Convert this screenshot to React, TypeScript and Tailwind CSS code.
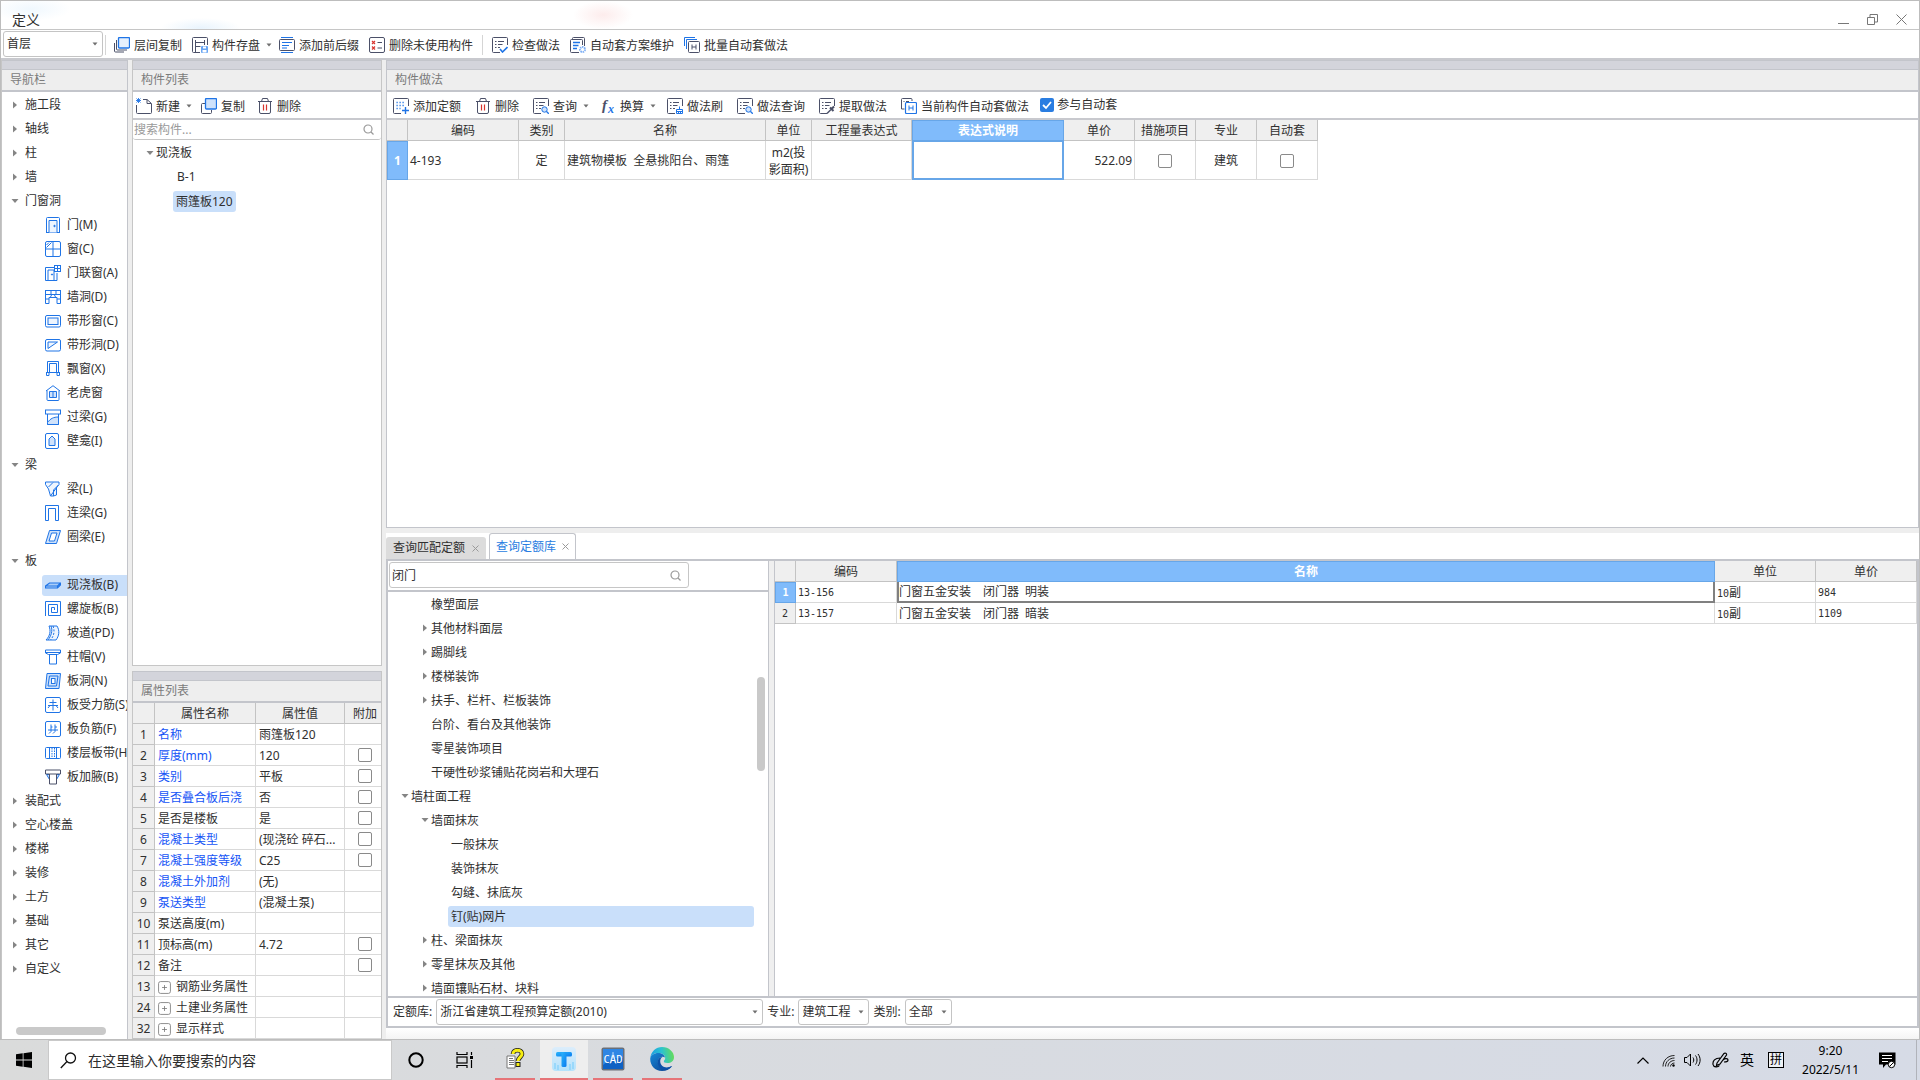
import type { ReactNode } from "react";

const D = "#4b5068";
const B = "#1f74e6";
const L = "#cfe2fb";

function Svg({ children, size = 16, stroke = B }: { children: ReactNode; size?: number; stroke?: string }) {
  return (
    <svg width={size} height={size} viewBox="0 0 16 16" fill="none" stroke={stroke} strokeWidth="1" className="shrink-0" aria-hidden="true">
      {children}
    </svg>
  );
}

/* ---------- toolbar icons ---------- */

const noteLines = (
  <>
    <path d="M15.500 8V1.500a1 1 0 0 0-1-1h-13a1 1 0 0 0-1 1v13a1 1 0 0 0 1 1H8" stroke={D} />
    <path d="M3 4.500h1.500M6 4.500h6M3 7.500h1.500M6 7.500h4.500M3 10.500h1.500M6 10.500h2" stroke={D} />
  </>
);

const tool: Record<string, ReactNode> = {
  floorCopy: (
    <>
      <rect x="4.500" y="0.500" width="11" height="10.500" rx="1" fill="#e6f0fd" strokeWidth="1.300" />
      <path d="M2.500 3v9a1 1 0 0 0 1 1H13" stroke={D} />
      <path d="M0.500 6v8a1 1 0 0 0 1 1H10" stroke={D} />
    </>
  ),
  store: (
    <>
      <path d="M8 15.500H1.500a1 1 0 0 1-1-1v-13a1 1 0 0 1 1-1h13a1 1 0 0 1 1 1V8" stroke={D} />
      <path d="M3.500 3v12M3.500 5.500h9M12.500 3v5M3.500 9.500h5" stroke={D} />
      <rect x="9" y="9" width="7" height="7" rx="1" fill="#6aa6f3" stroke="none" />
      <rect x="11" y="9.500" width="3" height="2" fill="#fff" stroke="none" />
      <rect x="10.500" y="13" width="4" height="2.500" fill="#fff" stroke="none" />
    </>
  ),
  affix: (
    <>
      <path d="M2 0.500h12M2 15.500h12" strokeWidth="1.200" />
      <rect x="0.500" y="2.500" width="15" height="11" rx="1" stroke={D} />
      <path d="M3 5.500h10M3 8.500h7M3 11h5" strokeWidth="1.200" />
    </>
  ),
  unused: (
    <>
      <rect x="0.500" y="0.500" width="15" height="15" rx="1.500" stroke={D} />
      <path d="M3 4l3 3M6 4l-3 3M3 9.500l3 3M6 9.500l-3 3" stroke="#d8342e" strokeWidth="1.200" />
      <path d="M8.500 5.500h4.500M8.500 11h4.500" stroke={D} />
    </>
  ),
  check: (
    <>
      {noteLines}
      <path d="M8 12l2.500 3 5-5" strokeWidth="1.600" />
    </>
  ),
  scheme: (
    <>
      <path d="M2.500 2.500v-1a1 1 0 0 1 1-1h10a1 1 0 0 1 1 1V9" stroke={D} />
      <path d="M9 15.500H1.500a1 1 0 0 1-1-1v-11a1 1 0 0 1 1-1h10a1 1 0 0 1 1 1V8" stroke={D} />
      <path d="M3 5.500h7M3 8.500h5.500M3 11.500h4" strokeWidth="1.300" />
      <circle cx="12.500" cy="12.500" r="2.500" stroke="#7fb0f5" strokeWidth="2" strokeDasharray="1.500 0.700" />
    </>
  ),
  batch: (
    <>
      <path d="M0.500 9V0.500H11" />
      <path d="M2.500 12V2.500H13" />
      <rect x="4.500" y="4.500" width="11" height="11" rx="1" stroke={D} />
      <path d="M8 7.500v5M12 7.500v5M8 10h4" stroke={D} />
    </>
  ),
  create: (
    <>
      <path d="M7 1.500h4l4.500 4v9a1 1 0 0 1-1 1h-13a1 1 0 0 1-1-1V7" stroke={D} />
      <path d="M11 1.500v4h4" stroke={D} />
      <path d="M0.500 0.500l4 4M4.500 0.500l-4 4M2.500 0v5M0 2.500h5" strokeWidth="0.900" />
    </>
  ),
  copy: (
    <>
      <path d="M4 5.500H1.500a1 1 0 0 0-1 1v8a1 1 0 0 0 1 1h8a1 1 0 0 0 1-1V12" stroke={D} />
      <rect x="4.500" y="0.500" width="11" height="10.500" rx="1" fill={L} strokeWidth="1.300" />
    </>
  ),
  trash: (
    <>
      <path d="M1 3.500h14M4.500 3.500l1-3h5l1 3M2.500 3.500V14a1.500 1.500 0 0 0 1.500 1.500h8a1.500 1.500 0 0 0 1.500-1.500V3.500" stroke={D} />
      <path d="M6.500 6.500v6M9.500 6.500v6" stroke="#d8342e" strokeWidth="1.200" />
    </>
  ),
  addQuota: (
    <>
      <path d="M15.500 8V1.500a1 1 0 0 0-1-1h-13a1 1 0 0 0-1 1v13a1 1 0 0 0 1 1H8" stroke={D} />
      <path d="M3.500 4.500h9M3.500 7.500h9M3.500 10.500h4" strokeDasharray="1.200 1.800" strokeWidth="1.300" />
      <path d="M12.500 9v7M9 12.500h7" strokeWidth="1.400" />
    </>
  ),
  query: (
    <>
      {noteLines}
      <circle cx="11.500" cy="11.500" r="2.700" fill={L} />
      <path d="M13.500 13.500l2.300 2.300" strokeWidth="1.300" />
    </>
  ),
  brush: (
    <>
      {noteLines}
      <path d="M9.500 15.500v-4h6v4zM12.500 8.500v3M9.500 13.500h6M11.500 13.500v2M13.500 13.500v2" />
    </>
  ),
  extract: (
    <>
      {noteLines}
      <path d="M8 15.500l4-4" stroke={D} strokeWidth="1.400" />
      <path d="M11 9.500l3.500 3.500M12.500 11l2.500-2.500" stroke={D} strokeWidth="2" />
    </>
  ),
  current: (
    <>
      <path d="M0.500 11V1.500a1 1 0 0 1 1-1H10a1 1 0 0 1 1 1V3M2.500 3.500h1M5 3.500h3" stroke={D} />
      <path d="M0.500 11h3" stroke={D} />
      <rect x="4.500" y="4.500" width="11" height="11" rx="1" strokeWidth="1.200" />
      <path d="M8 7.500v5M12 7.500v5M8 10h4" />
    </>
  ),
  fx: (
    <g stroke="none">
      <text x="2" y="12" fontFamily="Liberation Serif, serif" fontStyle="italic" fontWeight="700" fontSize="15" fill={D}>f</text>
      <text x="8" y="15" fontFamily="Liberation Serif, serif" fontStyle="italic" fontWeight="700" fontSize="12" fill={B}>x</text>
    </g>
  ),
};

/* ---------- navigation icons ---------- */

const nav: Record<string, ReactNode> = {
  door: (
    <>
      <path d="M1 15.500h14M1.500 15.500v-14a1 1 0 0 1 1-1h11a1 1 0 0 1 1 1v14" />
      <path d="M4 15.500V3.500h8v12" fill="#eef5fe" />
      <circle cx="9.500" cy="9" r="0.700" fill={B} />
    </>
  ),
  window: (
    <>
      <rect x="0.500" y="0.500" width="15" height="15" rx="1.500" />
      <path d="M8 0.500v15M0.500 8h15M1.500 6.500l5-5M1.500 4l2.500-2.500" />
    </>
  ),
  doorWindow: (
    <>
      <path d="M9 2.500H0.500v13h11.500V8" />
      <path d="M3 15V5h6v10" />
      <circle cx="7" cy="9.500" r="0.600" fill={B} />
      <rect x="9.500" y="0.500" width="6" height="6" fill="#fff" />
      <path d="M12.500 0.500v6M9.500 3.500h6" />
    </>
  ),
  wallHole: (
    <>
      <rect x="0.500" y="1.500" width="15" height="4" />
      <path d="M0.500 5.500v9h3.500v-6h8v6h3.500v-9M6 1.500v4M11 1.500v4M0.500 10h3.500M12 10h3.500M5.500 8l1-2M10.500 8l-1-2" />
    </>
  ),
  stripWindow: (
    <>
      <rect x="0.500" y="2.500" width="15" height="11.500" rx="1.500" />
      <rect x="3" y="5" width="10" height="6.500" fill="#eef5fe" />
    </>
  ),
  stripHole: (
    <>
      <rect x="0.500" y="2.500" width="15" height="11.500" rx="1.500" />
      <path d="M3 11.500V5h9.500z" fill="#eef5fe" />
    </>
  ),
  bay: (
    <>
      <path d="M2.500 11.500v-11h11v11M4.500 11V2.500h7V11M1 11.500h14M1.500 11.500v3h2.500v-3M12 11.500v3h2.500v-3" />
    </>
  ),
  dormer: (
    <>
      <path d="M1 6L8 0.700 15 6M2 5.500v9a1 1 0 0 0 1 1h10a1 1 0 0 0 1-1v-9" />
      <path d="M4.500 12.500v-6h7v6zM8 6.500v6" fill={L} />
    </>
  ),
  lintel: (
    <>
      <rect x="0.500" y="1" width="15" height="4" />
      <path d="M2.500 5v10.500h11V5" />
      <path d="M2.500 13.500c3-4 6-5.500 11-5.500v7.500h-11z" fill={L} />
    </>
  ),
  niche: (
    <>
      <rect x="0.500" y="0.500" width="13" height="15" rx="1.500" />
      <path d="M4 12.500V6l3-3 3 3v6.500z" fill={L} />
    </>
  ),
  beam: (
    <>
      <path d="M0.500 1h13.500v2.500L8.500 9v6h-3L3.500 8 0.500 3.500zM3.500 6L8 1.500M5.500 15L13.500 4M11.500 6.500V14l-3 1" fill="#eef5fe" />
    </>
  ),
  linkBeam: <path d="M0.500 15.500v-15h13v15h-3V3.500H3.500v12z" />,
  ringBeam: (
    <>
      <path d="M4.500 1.500h11l-4 13H0.500z" fill={L} />
      <path d="M6.500 4h5.500l-2.500 8H4z" fill="#fff" />
    </>
  ),
  slab: <path d="M0.500 9l4-3h11v2l-3 3H0.500zM0.500 9h12v2M12.500 9l3-3" fill="#a9cdf9" strokeWidth="1.200" />,
  spiral: <path d="M0.500 15V0.500h15v14H3.500V3.500h9v8H6.500V6.500h3v2.500" />,
  ramp: (
    <>
      <path d="M4 1h8c3 5 2 10-1 14H1c4-4 5-9 3-14z" fill="#eef5fe" />
      <path d="M8 1c2 5 1 10-2.500 14" strokeDasharray="2 1.500" />
      <path d="M6 1c2 5 0 10-3 14" />
    </>
  ),
  cap: <path d="M0.500 1h15v3l-3 1.500H3.500L0.500 4zM0.500 3.500h15M4.500 5.500v9.500h7V5.500" />,
  slabHole: (
    <>
      <path d="M2 0.500h13.500l-1.500 15H0.500z" fill={L} />
      <path d="M4.500 3h8.500l-1.500 10H3z" />
      <rect x="6.500" y="5.500" width="3.500" height="5" fill="#fff" />
    </>
  ),
  forceBar: (
    <>
      <rect x="0.500" y="0.500" width="15" height="15" rx="1.500" />
      <path d="M3 8.500h10M4.500 5.500h7M8 2.500v11M3 11l2-2.500M13 11l-2-2.500" />
    </>
  ),
  negBar: (
    <>
      <rect x="0.500" y="0.500" width="15" height="15" rx="1.500" />
      <path d="M3 9h10M6 3.500v7l-2 2M10 3.500v7l-2 2M6 6h1.500M10 6h2" />
    </>
  ),
  band: (
    <>
      <rect x="0.500" y="2.500" width="15" height="11" rx="1" />
      <path d="M4.500 2.500v11M11.500 2.500v11" />
      <path d="M7 3v10M9.500 3v10" strokeDasharray="1.500 1" />
    </>
  ),
  haunch: (
    <>
      <path d="M1.500 5.500l3 5v-5zM14.500 5.500l-3 5v-5z" fill={L} />
      <path d="M0.500 1h15v4h-4v10h-7V5h-4zM4.500 5h7" stroke={D} />
    </>
  ),
};

type Node = { t: string; i?: string; open?: boolean; sel?: boolean };

const navNodes: Node[] = [
  { t: "施工段" }, { t: "轴线" }, { t: "柱" }, { t: "墙" },
  { t: "门窗洞", open: true },
  { t: "门(M)", i: "door" }, { t: "窗(C)", i: "window" }, { t: "门联窗(A)", i: "doorWindow" },
  { t: "墙洞(D)", i: "wallHole" }, { t: "带形窗(C)", i: "stripWindow" }, { t: "带形洞(D)", i: "stripHole" },
  { t: "飘窗(X)", i: "bay" }, { t: "老虎窗", i: "dormer" }, { t: "过梁(G)", i: "lintel" }, { t: "壁龛(I)", i: "niche" },
  { t: "梁", open: true },
  { t: "梁(L)", i: "beam" }, { t: "连梁(G)", i: "linkBeam" }, { t: "圈梁(E)", i: "ringBeam" },
  { t: "板", open: true },
  { t: "现浇板(B)", i: "slab", sel: true }, { t: "螺旋板(B)", i: "spiral" }, { t: "坡道(PD)", i: "ramp" },
  { t: "柱帽(V)", i: "cap" }, { t: "板洞(N)", i: "slabHole" }, { t: "板受力筋(S)", i: "forceBar" },
  { t: "板负筋(F)", i: "negBar" }, { t: "楼层板带(H)", i: "band" }, { t: "板加腋(B)", i: "haunch" },
  { t: "装配式" }, { t: "空心楼盖" }, { t: "楼梯" }, { t: "装修" }, { t: "土方" }, { t: "基础" }, { t: "其它" }, { t: "自定义" },
];

type Prop = { n: number; k: string; v?: string; blue?: boolean; box?: boolean; plus?: boolean };

const props: Prop[] = [
  { n: 1, k: "名称", v: "雨篷板120", blue: true },
  { n: 2, k: "厚度(mm)", v: "120", blue: true, box: true },
  { n: 3, k: "类别", v: "平板", blue: true, box: true },
  { n: 4, k: "是否叠合板后浇", v: "否", blue: true, box: true },
  { n: 5, k: "是否是楼板", v: "是", box: true },
  { n: 6, k: "混凝土类型", v: "(现浇砼 碎石...", blue: true, box: true },
  { n: 7, k: "混凝土强度等级", v: "C25", blue: true, box: true },
  { n: 8, k: "混凝土外加剂", v: "(无)", blue: true },
  { n: 9, k: "泵送类型", v: "(混凝土泵)", blue: true },
  { n: 10, k: "泵送高度(m)" },
  { n: 11, k: "顶标高(m)", v: "4.72", box: true },
  { n: 12, k: "备注", box: true },
  { n: 13, k: "钢筋业务属性", plus: true },
  { n: 24, k: "土建业务属性", plus: true },
  { n: 32, k: "显示样式", plus: true },
];

const quotaTree: { t: string; lv: 1 | 2 | 3; a?: "open" | "closed"; sel?: boolean }[] = [
  { t: "橡塑面层", lv: 2 },
  { t: "其他材料面层", lv: 2, a: "closed" },
  { t: "踢脚线", lv: 2, a: "closed" },
  { t: "楼梯装饰", lv: 2, a: "closed" },
  { t: "扶手、栏杆、栏板装饰", lv: 2, a: "closed" },
  { t: "台阶、看台及其他装饰", lv: 2 },
  { t: "零星装饰项目", lv: 2 },
  { t: "干硬性砂浆铺贴花岗岩和大理石", lv: 2 },
  { t: "墙柱面工程", lv: 1, a: "open" },
  { t: "墙面抹灰", lv: 2, a: "open" },
  { t: "一般抹灰", lv: 3 },
  { t: "装饰抹灰", lv: 3 },
  { t: "勾缝、抹底灰", lv: 3 },
  { t: "钉(贴)网片", lv: 3, sel: true },
  { t: "柱、梁面抹灰", lv: 2, a: "closed" },
  { t: "零星抹灰及其他", lv: 2, a: "closed" },
  { t: "墙面镶贴石材、块料", lv: 2, a: "closed" },
];

/* ---------- small parts ---------- */

function Arrow({ state }: { state?: "open" | "closed" }) {
  return (
    <svg width="8" height="8" viewBox="0 0 8 8" className="shrink-0" fill="#858585" aria-hidden="true">
      {state === "open" && <path d="M0.500 2h7L4 6z" />}
      {state === "closed" && <path d="M2 0.500v7L6 4z" />}
    </svg>
  );
}

function Caret({ className = "" }: { className?: string }) {
  return (
    <svg width="6" height="4" viewBox="0 0 6 4" className={className} fill="#6f6f6f" aria-hidden="true">
      <path d="M0.500 0.500h5L3 3.500z" />
    </svg>
  );
}

function ToolButton({ icon, label, menu }: { icon: string; label: string; menu?: boolean }) {
  return (
    <button className="flex shrink-0 items-center gap-1 whitespace-nowrap">
      <Svg>{tool[icon]}</Svg>
      <span className="pt-px">{label}</span>
      {menu && <Caret className="-mr-[3px] ml-0.5" />}
    </button>
  );
}

function Picker({ label, value, className }: { label: string; value: string; className: string }) {
  return (
    <span className={`relative block ${className}`}>
      <select aria-label={label} defaultValue={value} className="block h-full w-full appearance-none rounded-[3px] border border-[#c4c4c4] bg-white pr-3 pl-[3px] leading-4 outline-none">
        <option>{value}</option>
      </select>
      <Caret className="pointer-events-none absolute top-1/2 right-[5px] -mt-0.5" />
    </span>
  );
}

function Box({ label }: { label: string }) {
  return <input type="checkbox" aria-label={label} className="block size-[14px] appearance-none rounded-[2px] border border-[#8a8a8a] bg-white" />;
}

function PanelTitle({ children }: { children: ReactNode }) {
  return (
    <>
      <div className="h-[9px] shrink-0 border-t border-[#c3c5cb] bg-[#d3d4db]" />
      <h2 className="flex h-[23px] shrink-0 items-center border-t border-b-2 border-[#c3c5cb] bg-[#eee] pl-2 text-[#7b7b7b]">{children}</h2>
    </>
  );
}

function Magnifier() {
  return (
    <svg width="11" height="11" viewBox="0 0 11 11" fill="none" stroke="#9a9a9a" strokeWidth="1.200" aria-hidden="true">
      <circle cx="5" cy="5" r="4" />
      <path d="M8 8l2.500 2.500" />
    </svg>
  );
}

const th = "border-r border-b border-[#c3c3c3] bg-[#efefef] p-0 pt-0.5 text-center font-normal";
const td = "border-r border-b border-[#d9d9d9] p-0 pt-0.5";
const thSel = "border border-[#67a6e8] bg-[#80bbfb] p-0 pt-px text-center font-bold text-white";

/* ---------- panels ---------- */

function Navigation() {
  return (
    <aside className="flex w-[126px] shrink-0 flex-col overflow-hidden border-r border-[#c3c5cb] bg-white">
      <PanelTitle>导航栏</PanelTitle>
      <ul className="min-h-0 flex-1 overflow-hidden pt-px">
        {navNodes.map((n) =>
          n.i ? (
            <li key={n.t} className="flex h-6 items-center pl-10">
              <button className={`flex h-[21px] flex-1 items-center gap-[6px] rounded-l-[3px] pl-[3px] whitespace-nowrap ${n.sel ? "bg-[#c9dffa]" : ""}`}>
                <Svg>{nav[n.i]}</Svg>
                {n.t}
              </button>
            </li>
          ) : (
            <li key={n.t} className="flex h-6 items-center pl-[9px]">
              <button className="flex items-center gap-[6px] whitespace-nowrap">
                <Arrow state={n.open ? "open" : "closed"} />
                {n.t}
              </button>
            </li>
          ),
        )}
      </ul>
      <div className="mb-1 ml-[14px] h-2 w-[90px] rounded-full bg-[#c9c9c9]" />
    </aside>
  );
}

function ComponentColumn() {
  return (
    <div className="flex w-[250px] shrink-0 flex-col gap-[5px]">
      <section className="flex min-h-0 flex-1 flex-col border-x border-b border-[#c6c6c6] bg-white">
        <PanelTitle>构件列表</PanelTitle>
        <div className="flex h-7 shrink-0 items-center gap-3 border-b-2 border-[#c8c9ce] pt-0.5 pl-[3px]">
          <ToolButton icon="create" label="新建" menu />
          <ToolButton icon="copy" label="复制" />
          <ToolButton icon="trash" label="删除" />
        </div>
        <label className="flex h-5 shrink-0 items-center rounded-[3px] border-b border-[#c6c6c6] pr-[7px] pl-px">
          <input aria-label="搜索构件" placeholder="搜索构件..." className="min-w-0 flex-1 leading-4 outline-none placeholder:text-[#9a9a9a]" />
          <Magnifier />
        </label>
        <ul className="pt-px">
          <li className="flex h-6 items-center gap-0.5 pl-[13px]">
            <Arrow state="open" />
            现浇板
          </li>
          <li className="flex h-6 items-center pl-11">B-1</li>
          <li className="flex h-6 items-center pl-10">
            <span className="rounded-[3px] bg-[#c9dffa] px-[3px] leading-[21px]">雨篷板120</span>
          </li>
        </ul>
      </section>
      <section className="flex shrink-0 flex-col border-x border-[#c6c6c6] bg-white">
        <PanelTitle>属性列表</PanelTitle>
        <table className="w-full table-fixed border-separate border-spacing-0">
          <colgroup>
            <col className="w-[22px]" />
            <col className="w-[101px]" />
            <col />
            <col className="w-9" />
          </colgroup>
          <thead>
            <tr className="h-[21px]">
              <th className={th} />
              <th className={th}>属性名称</th>
              <th className={th}>属性值</th>
              <th className="border-b border-[#c3c3c3] bg-[#efefef] p-0 pt-0.5 pl-1 text-center font-normal">附加</th>
            </tr>
          </thead>
          <tbody>
            {props.map((p) => (
              <tr key={p.n} className="h-[21px]">
                <td className={th}>{p.n}</td>
                <td className={`${td} overflow-hidden pl-[3px] whitespace-nowrap ${p.blue ? "text-[#1554f6]" : ""}`}>
                  {p.plus ? (
                    <button className="flex items-center gap-[5px]">
                      <Svg size={13} stroke="#777">
                        <rect x="0.700" y="0.700" width="14.600" height="14.600" rx="2.500" />
                        <path d="M5 8h6M8 5v6" />
                      </Svg>
                      {p.k}
                    </button>
                  ) : (
                    p.k
                  )}
                </td>
                <td className={`${td} overflow-hidden pl-[3px] whitespace-nowrap`}>{p.v}</td>
                <td className="border-b border-[#d9d9d9] p-0">
                  {p.box && (
                    <span className="ml-[13px] block">
                      <Box label={`附加 ${p.k}`} />
                    </span>
                  )}
                </td>
              </tr>
            ))}
          </tbody>
        </table>
      </section>
    </div>
  );
}

function MethodPanel() {
  return (
    <section className="flex min-h-0 flex-1 flex-col border-x border-b border-[#c3c5cb] bg-white">
      <PanelTitle>构件做法</PanelTitle>
      <div className="flex h-7 shrink-0 items-center gap-[14px] border-b-2 border-[#c8c9ce] pt-0.5 pl-[6px]">
        <ToolButton icon="addQuota" label="添加定额" />
        <ToolButton icon="trash" label="删除" />
        <ToolButton icon="query" label="查询" menu />
        <ToolButton icon="fx" label="换算" menu />
        <ToolButton icon="brush" label="做法刷" />
        <ToolButton icon="query" label="做法查询" />
        <ToolButton icon="extract" label="提取做法" />
        <ToolButton icon="current" label="当前构件自动套做法" />
        <label className="-ml-[3px] flex items-center gap-[3px] pb-0.5">
          <span className="relative block size-[14px]">
            <input type="checkbox" defaultChecked className="block size-[14px] appearance-none rounded-[2px] bg-[#2a7de1]" />
            <svg viewBox="0 0 14 14" className="pointer-events-none absolute inset-0" fill="none" stroke="#fff" strokeWidth="1.800" aria-hidden="true">
              <path d="M3 7l3 3 5-6" />
            </svg>
          </span>
          参与自动套
        </label>
      </div>
      <table className="w-[931px] table-fixed border-separate border-spacing-0">
        <colgroup>
          <col className="w-[21px]" />
          <col className="w-[111px]" />
          <col className="w-[46px]" />
          <col className="w-[201px]" />
          <col className="w-[46px]" />
          <col className="w-[100px]" />
          <col className="w-[152px]" />
          <col className="w-[71px]" />
          <col className="w-[61px]" />
          <col className="w-[61px]" />
          <col className="w-[61px]" />
        </colgroup>
        <thead>
          <tr className="h-[21px]">
            <th className={th} />
            <th className={th}>编码</th>
            <th className={th}>类别</th>
            <th className={th}>名称</th>
            <th className={th}>单位</th>
            <th className={th}>工程量表达式</th>
            <th className={thSel}>表达式说明</th>
            <th className={th}>单价</th>
            <th className={th}>措施项目</th>
            <th className={th}>专业</th>
            <th className={th}>自动套</th>
          </tr>
        </thead>
        <tbody>
          <tr className="h-[39px]">
            <td className={thSel}>1</td>
            <td className={`${td} pl-[2px]`}>4-193</td>
            <td className={`${td} text-center`}>定</td>
            <td className={`${td} pl-[2px] whitespace-pre`}>建筑物模板{"  "}全悬挑阳台、雨篷</td>
            <td className={`${td} text-center leading-[17px] whitespace-nowrap`}>m2(投<br />影面积)</td>
            <td className={td} />
            <td className="border-2 border-t border-[#67a6e8] p-0" />
            <td className={`${td} pr-[2px] text-right`}>522.09</td>
            <td className={td}>
              <span className="flex justify-center"><Box label="措施项目" /></span>
            </td>
            <td className={`${td} text-center`}>建筑</td>
            <td className={td}>
              <span className="flex justify-center"><Box label="自动套" /></span>
            </td>
          </tr>
        </tbody>
      </table>
    </section>
  );
}

const indent = { 1: "pl-[13px]", 2: "pl-[33px]", 3: "pl-[52px]" };

function QuotaPanel() {
  return (
    <section className="flex shrink-0 flex-col bg-white">
      <div className="flex h-[26px] items-end">
        <button className="flex h-[22px] items-center gap-[7px] rounded-t-[3px] bg-[#dcdcdc] px-[7px]">
          查询匹配定额
          <CloseX />
        </button>
        <button className="ml-[3px] flex h-[26px] items-center gap-[6px] rounded-t-[3px] border border-b-0 border-[#c3c5cb] bg-white px-[6px] text-[#2a7de1]">
          查询定额库
          <CloseX />
        </button>
      </div>
      <div className="flex flex-col border-2 border-[#c3c5cb]">
        <div className="flex">
          <div className="flex w-[381px] shrink-0 flex-col border-r border-[#c3c5cb]">
            <div className="border-b-2 border-[#c3c5cb] p-[1px] pb-[2px]">
              <label className="flex h-[26px] w-[300px] items-center rounded-[3px] border border-[#c6c6c6] pr-[7px] pl-[2px]">
                <input aria-label="查询定额" defaultValue="闭门" className="min-w-0 flex-1 pt-px leading-4 outline-none" />
                <Magnifier />
              </label>
            </div>
            <div className="flex h-[404px] overflow-hidden">
              <ul className="flex-1">
                {quotaTree.map((q) => (
                  <li key={q.t} className={`flex h-6 items-center ${indent[q.lv]}`}>
                    {q.lv !== 3 && (
                      <span className="mr-0.5">
                        <Arrow state={q.a} />
                      </span>
                    )}
                    <span className={`leading-[21px] ${q.lv === 3 ? "ml-2 flex-1 rounded-[3px] pl-[3px]" : ""} ${q.sel ? "bg-[#c9dffa]" : ""}`}>{q.t}</span>
                  </li>
                ))}
              </ul>
              <div className="mt-[85px] mr-[3px] ml-[3px] h-[94px] w-2 rounded-full bg-[#c9c9c9]" />
            </div>
          </div>
          <div className="w-[5px] shrink-0 bg-[#efefef]" />
          <div className="min-w-0 flex-1 border-l border-[#c3c5cb]">
            <table className="w-full table-fixed border-separate border-spacing-0">
              <colgroup>
                <col className="w-[21px]" />
                <col className="w-[101px]" />
                <col />
                <col className="w-[101px]" />
                <col className="w-[101px]" />
              </colgroup>
              <thead>
                <tr className="h-[21px]">
                  <th className={th} />
                  <th className={th}>编码</th>
                  <th className={thSel}>名称</th>
                  <th className={th}>单位</th>
                  <th className={th}>单价</th>
                </tr>
              </thead>
              <tbody className="font-['DejaVu_Sans_Mono','Noto_Sans_CJK_SC',monospace] text-[10px] leading-4">
                <tr className="h-[21px]">
                  <td className={thSel}>1</td>
                  <td className={`${td} pl-[2px]`}>13-156</td>
                  <td className="border-2 border-t-0 border-[#808080] p-0 pt-px text-xs leading-4 whitespace-pre">门窗五金安装　闭门器<span className="text-[10px]"> </span>明装</td>
                  <td className={`${td} pl-[2px]`}>10<span className="text-xs leading-4">副</span></td>
                  <td className={`${td} pl-[2px]`}>984</td>
                </tr>
                <tr className="h-[21px]">
                  <td className={th}>2</td>
                  <td className={`${td} pl-[2px]`}>13-157</td>
                  <td className={`${td} pl-[2px] text-xs leading-4 whitespace-pre`}>门窗五金安装　闭门器<span className="text-[10px]"> </span>暗装</td>
                  <td className={`${td} pl-[2px]`}>10<span className="text-xs leading-4">副</span></td>
                  <td className={`${td} pl-[2px]`}>1109</td>
                </tr>
              </tbody>
            </table>
          </div>
        </div>
        <div className="flex h-[30px] items-center gap-1 border-t-2 border-[#c3c5cb] pl-[5px] whitespace-nowrap">
          <span>定额库:</span>
          <Picker label="定额库" value="浙江省建筑工程预算定额(2010)" className="h-[26px] w-[327px]" />
          <span>专业:</span>
          <Picker label="专业" value="建筑工程" className="h-[26px] w-[71px]" />
          <span>类别:</span>
          <Picker label="类别" value="全部" className="h-[26px] w-[47px]" />
        </div>
      </div>
    </section>
  );
}

function CloseX() {
  return (
    <svg width="7" height="7" viewBox="0 0 7 7" stroke="#9a9a9a" aria-hidden="true">
      <path d="M0.500 0.500l6 6M6.500 0.500l-6 6" />
    </svg>
  );
}

function TaskApp({ label, active, children }: { label: string; active?: boolean; children: ReactNode }) {
  return (
    <button aria-label={label} className={`flex h-full w-12 flex-col items-center justify-between ${active ? "bg-[#eeeeee]" : ""}`}>
      <span className="flex min-h-0 flex-1 items-center">{children}</span>
      <span className={`h-0.5 bg-[#e67478] ${active ? "w-12" : "w-10"}`} />
    </button>
  );
}

function Taskbar() {
  return (
    <footer className="flex h-10 shrink-0 items-center bg-linear-to-r from-[#dadbdb] to-[#d6dbe6] text-black">
      <button aria-label="开始" className="flex h-full w-12 items-center justify-center">
        <svg width="16" height="16" viewBox="0 0 16 16" aria-hidden="true">
          <path d="M0 2.300L6.700 1.300V7.600H0zM7.500 1.200L16 0v7.600H7.500zM0 8.400h6.700v6.300L0 13.700zM7.500 8.400H16V16l-8.500-1.200z" />
        </svg>
      </button>
      <label className="flex h-full w-[344px] items-center gap-[11px] border border-[#c9c9c9] bg-white pl-[11px]">
        <svg width="17" height="17" viewBox="0 0 17 17" fill="none" stroke="#111" strokeWidth="1.300" aria-hidden="true">
          <circle cx="10.500" cy="6" r="5" />
          <path d="M7 9.500L0.800 16" />
        </svg>
        <input aria-label="搜索" placeholder="在这里输入你要搜索的内容" className="min-w-0 flex-1 pt-px text-sm outline-none placeholder:text-[#2c2c2c]" />
      </label>
      <button aria-label="Cortana" className="flex h-full w-12 items-center justify-center">
        <svg width="16" height="16" viewBox="0 0 16 16" fill="none" stroke="#000" strokeWidth="2" aria-hidden="true">
          <circle cx="8" cy="8" r="6.700" />
        </svg>
      </button>
      <button aria-label="任务视图" className="flex h-full w-12 items-center justify-center">
        <svg width="17" height="16" viewBox="0 0 17 16" fill="none" stroke="#000" strokeWidth="1.200" aria-hidden="true">
          <path d="M1 0v2.500h10V0M1 16v-2.500h10V16M15.500 0v3M15.500 8v8" />
          <rect x="1" y="5" width="10" height="6" />
          <rect x="14" y="4" width="3" height="3" fill="#000" stroke="none" />
        </svg>
      </button>
      <div className="ml-[3px] flex h-full gap-[1px]">
        <TaskApp label="帮助">
          <svg width="20" height="22" viewBox="0 0 20 22" aria-hidden="true">
            <path d="M2 8h8v12H2z" fill="#fff" stroke="#777" />
            <path d="M4 10.500h4M4 12.500h5M4 14.500h5M4 16.500h5" stroke="#777" />
            <path d="M8 6c0-5 9-5 9 0 0 3-4 3.500-4 7" fill="none" stroke="#222" strokeWidth="4.600" />
            <path d="M8 6c0-5 9-5 9 0 0 3-4 3.500-4 7" fill="none" stroke="#f7ee12" strokeWidth="3" />
            <rect x="11" y="14.500" width="4" height="4" fill="#f7ee12" stroke="#222" />
          </svg>
        </TaskApp>
        <TaskApp label="算量" active>
          <svg width="24" height="24" viewBox="0 0 24 24" aria-hidden="true">
            <defs>
              <linearGradient id="tileBg" x1="0" y1="0" x2="0" y2="1">
                <stop offset="0" stopColor="#dcedfb" />
                <stop offset="1" stopColor="#b4e2fb" />
              </linearGradient>
              <linearGradient id="tileT" x1="0" y1="0" x2="1" y2="1">
                <stop offset="0" stopColor="#2ab4fb" />
                <stop offset="1" stopColor="#0a7cf0" />
              </linearGradient>
            </defs>
            <rect width="24" height="24" rx="4" fill="url(#tileBg)" />
            <path d="M3 16v6M6 18v5M18 17v6M21 15v7" stroke="#8dd4fb" strokeWidth="1.500" />
            <rect x="4" y="5" width="16" height="4.500" rx="1.500" fill="url(#tileT)" />
            <rect x="9.500" y="5" width="5" height="15" rx="1.500" fill="url(#tileT)" />
          </svg>
        </TaskApp>
        <TaskApp label="CAD">
          <svg width="24" height="24" viewBox="0 0 24 24" aria-hidden="true">
            <rect x="0.500" y="0.500" width="23" height="23" rx="2" fill="#6a6f78" />
            <rect x="2" y="2" width="20" height="20" fill="#0f62c4" />
            <path d="M2 2h20v9C14 10 8 13 2 18z" fill="#2f86e4" />
            <path d="M12 5l-3 12M12 5l3 12" stroke="#9cc8f5" strokeWidth="0.800" />
            <text x="12" y="16" textAnchor="middle" fontFamily="DejaVu Sans Mono, monospace" fontSize="10.500" fill="#fff">CAD</text>
          </svg>
        </TaskApp>
        <TaskApp label="Edge">
          <svg width="24" height="24" viewBox="0 0 24 24" aria-hidden="true">
            <defs>
              <linearGradient id="edgeTop" x1="0" y1="0.500" x2="1" y2="0.400">
                <stop offset="0" stopColor="#1b9de2" />
                <stop offset="0.500" stopColor="#2cc3d0" />
                <stop offset="1" stopColor="#66dd55" />
              </linearGradient>
              <linearGradient id="edgeLow" x1="0" y1="0" x2="1" y2="1">
                <stop offset="0" stopColor="#1689d8" />
                <stop offset="1" stopColor="#0d3f8e" />
              </linearGradient>
            </defs>
            <path d="M0.300 11C1 4.500 6 0 12 0c7 0 12 5 12 10 0 4-3 6-6.500 6-3 0-4-1-3.600-2 .5-1 1.300-1.600 1.300-3C15.200 8 12 6 8.500 6 4.500 6 1 8 0.300 11z" fill="url(#edgeTop)" />
            <path d="M0.200 12c0-3.500 4-6 8-6 3.500 0 6.500 2 6.700 4.500C13 9 9 9.500 8 13.500 7 19 12 21.500 16 21c3-.3 4.500-1.500 6-2-2 3-5.500 5-10 5C5 24 0.200 18.500 0.200 12z" fill="url(#edgeLow)" />
            <path d="M8 13c-1.500 5 2 10 8 9.800 3-.2 5-2 6.200-3.800-6 3-12 1-12-5 0-1.500.8-3 2.200-4-2-.2-4 1.200-4.400 3z" fill="#0c52a8" />
          </svg>
        </TaskApp>
      </div>
      <div className="ml-auto flex h-full items-center text-[13px]">
        <svg width="12" height="7" viewBox="0 0 12 7" fill="none" stroke="#000" strokeWidth="1.200" className="mr-[13px]" aria-hidden="true">
          <path d="M0.500 6.500L6 1l5.500 5.500" />
        </svg>
        <svg width="13" height="13" viewBox="0 0 13 13" fill="none" stroke="#222" className="mr-[9px]" aria-hidden="true">
          <path d="M1 12.500C1 6 6 1.500 12.500 1.500M3.500 12.500C3.500 7.500 7.500 4 12.500 4M6 12.500c0-3.500 3-6 6.500-6M8.500 12.500c0-2 2-3.500 4-3.500" />
          <circle cx="11.500" cy="11.500" r="1.200" fill="#000" stroke="none" />
        </svg>
        <svg width="17" height="14" viewBox="0 0 17 14" fill="none" stroke="#000" className="mr-[11px]" aria-hidden="true">
          <path d="M0.500 4.500h2.500L6.500 1v12L3 9.500H0.500zM9 4.500c1 1.500 1 3.500 0 5M11.500 2.500c2 2.500 2 6.500 0 9M14 1c2.800 3.500 2.800 8.500 0 12" />
        </svg>
        <svg width="17" height="16" viewBox="0 0 17 16" fill="none" stroke="#000" strokeWidth="1.200" className="mr-[11px]" aria-hidden="true">
          <path d="M5 11L12 1.500c1-1 3 0 2.500 1.500L8 12l-3.500 1.500zM8 6C3 6 0.500 9 1 12.500c.5 3 5 3 6.500 1M11 8c2-2 5-1.500 5 0s-2 2-4 2" />
        </svg>
        <span className="mr-[14px] text-sm">英</span>
        <span className="mr-[18px] flex size-4 items-center justify-center border border-black bg-white/60 text-xs leading-none">拼</span>
        <div className="mr-5 text-center text-xs leading-[19px]">
          <div>9:20</div>
          <div>2022/5/11</div>
        </div>
        <svg width="17" height="17" viewBox="0 0 17 17" aria-hidden="true">
          <path d="M0 0.500h16.500v12H7l-3 3.500v-3.500H0z" />
          <path d="M3 3.500h10M3 6.500h10M3 9.500h6" stroke="#fff" />
          <circle cx="12.500" cy="12.500" r="3.200" fill="#fff" stroke="#000" />
          <path d="M10.500 14.500l4-4" stroke="#000" />
        </svg>
        <span className="ml-5 h-full w-1 border-l border-[#b0b3ba]" />
      </div>
    </footer>
  );
}

export default function App() {
  return (
    <div className="flex h-screen flex-col overflow-hidden bg-[#eee] font-['Noto_Sans','Noto_Sans_CJK_SC',sans-serif] text-xs leading-4 text-[#303030]">
      <div className="flex min-h-0 flex-1 flex-col border border-[#bdbdbd]">
        <header className="flex h-[29px] shrink-0 items-center justify-between border-b border-[#c6c6c6] bg-[radial-gradient(ellipse_30px_14px_at_602px_14px,#fdecec,transparent),radial-gradient(ellipse_40px_10px_at_200px_27px,#e9f4fd,transparent),radial-gradient(ellipse_40px_12px_at_30px_8px,#f0f8fe,transparent)] bg-white pr-3 pl-[11px]">
          <h1 className="pt-[10px] text-sm leading-5">定义</h1>
          <div className="flex items-center gap-[18px] pt-2">
            <button aria-label="最小化" className="h-[9px] w-[11px] border-b border-[#777]" />
            <button aria-label="还原">
              <svg width="11" height="11" viewBox="0 0 11 11" fill="none" stroke="#777" aria-hidden="true">
                <path d="M0.500 3.500h7v7h-7zM3 3.500v-3h7.500v7.500h-3" />
              </svg>
            </button>
            <button aria-label="关闭">
              <svg width="11" height="11" viewBox="0 0 11 11" stroke="#777" aria-hidden="true">
                <path d="M0.500 0.500l10 10M10.500 0.500l-10 10" />
              </svg>
            </button>
          </div>
        </header>
        <nav className="flex h-[30px] shrink-0 items-center border-b-2 border-[#c8c9ce] bg-white pl-[2px]">
          <Picker label="楼层" value="首层" className="h-[26px] w-[100px]" />
          <div className="ml-0.5 flex items-center gap-[10px] pt-0.5">
            <span className="-mr-[2px] h-5 w-px bg-[#d5d5d5]" />
            <ToolButton icon="floorCopy" label="层间复制" />
            <ToolButton icon="store" label="构件存盘" menu />
            <ToolButton icon="affix" label="添加前后缀" />
            <ToolButton icon="unused" label="删除未使用构件" />
            <span className="-mx-px h-5 w-px bg-[#d5d5d5]" />
            <ToolButton icon="check" label="检查做法" />
            <ToolButton icon="scheme" label="自动套方案维护" />
            <ToolButton icon="batch" label="批量自动套做法" />
          </div>
        </nav>
        <main className="flex min-h-0 flex-1 gap-1 border-l border-[#c6c6c6] bg-[#eee]">
          <Navigation />
          <ComponentColumn />
          <div className="flex min-w-0 flex-1 flex-col">
            <MethodPanel />
            <div className="h-[5px] shrink-0" />
            <QuotaPanel />
            <div className="h-[11px] shrink-0 bg-linear-to-b from-white to-[#f4f4f4]" />
          </div>
        </main>
      </div>
      <Taskbar />
    </div>
  );
}
